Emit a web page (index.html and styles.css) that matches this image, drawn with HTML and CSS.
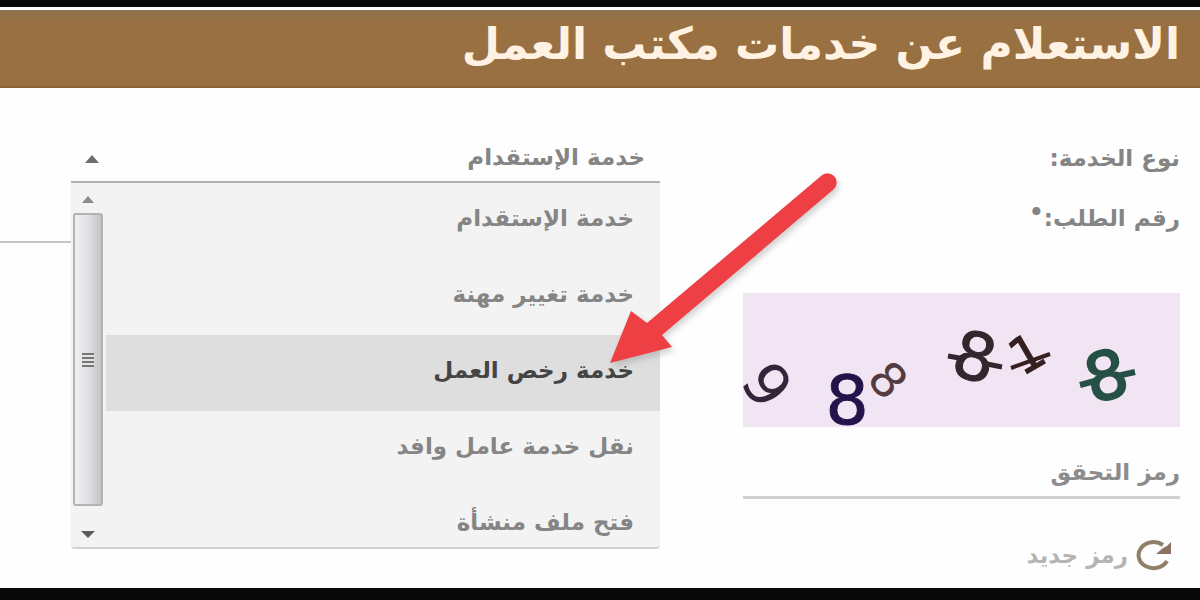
FILE: index.html
```html
<!DOCTYPE html>
<html lang="ar" dir="rtl">
<head>
<meta charset="utf-8">
<meta name="viewport" content="width=device-width, initial-scale=1">
<title>الاستعلام عن خدمات مكتب العمل</title>
<link rel="stylesheet" href="styles.css">
</head>
<body>
<main class="page">
  <header class="banner"><h1 class="title">الاستعلام عن خدمات مكتب العمل</h1></header>
  <form class="form">
    <div class="side">
      <label class="label" for="service">نوع الخدمة:</label>
      <label class="label" for="number">رقم الطلب:<span class="required">•</span></label>
      <svg class="captcha" viewBox="0 0 437 134" role="img" aria-label="رمز التحقق">
        <g class="digits">
          <text transform="translate(24 92) rotate(55)" y="21" font-size="60" fill="#35243a">9</text>
          <text transform="translate(104 106)" y="25" font-size="68" stroke="#24134a" fill="#24134a">8</text>
          <text transform="translate(145 87) rotate(48)" y="17" font-size="48" fill="#553a40">8</text>
          <text transform="translate(232 63) rotate(14)" y="24" font-size="66" stroke="#35252c" fill="#35252c">8</text>
          <text transform="translate(284 61) rotate(-30)" y="17" font-size="50" stroke="#351f20" fill="#351f20">1</text>
          <text transform="translate(363 82) rotate(-14)" y="24" font-size="66" stroke="#265045" stroke-width="2" fill="#265045">8</text>
        </g>
        <path d="M205 63L222 66M244 71L259 74" stroke="#35252c" stroke-width="5"/>
        <path d="M268 75L307 61" stroke="#351f20" stroke-width="4"/>
        <path d="M337 92L352 88M374 83L392 79" stroke="#265045" stroke-width="6"/>
      </svg>
      <div class="code">
        <label class="code-label" for="code">رمز التحقق</label>
        <input class="code-input" id="code" type="text">
      </div>
      <button class="refresh" type="button">
        <svg class="refresh-icon" viewBox="0 0 36 32" aria-hidden="true">
          <path d="M27 6A15 13 0 1 0 31 22" fill="none" stroke="#8f8068" stroke-width="4"/>
          <path d="M35 3V15H20L27 9L31 7Z" fill="#8d7162"/>
        </svg>
        <span>رمز جديد</span>
      </button>
    </div>
    <div class="fields">
      <div class="picker">
        <select class="select" id="service"><option>خدمة الإستقدام</option></select>
        <svg class="caret" viewBox="0 0 14 8" aria-hidden="true"><path d="M0 8L7 0L14 8Z" fill="#6e6e6e"/></svg>
        <div class="menu">
          <ul class="options" role="listbox" aria-label="نوع الخدمة">
            <li class="option" role="option">خدمة الإستقدام</li>
            <li class="option" role="option">خدمة تغيير مهنة</li>
            <li class="option selected" role="option" aria-selected="true">خدمة رخص العمل</li>
            <li class="option" role="option">نقل خدمة عامل وافد</li>
            <li class="option" role="option">فتح ملف منشأة</li>
          </ul>
          <div class="scrollbar">
            <svg class="scroll-arrow" viewBox="0 0 14 8" aria-hidden="true"><path d="M1 8L7 1L13 8Z" fill="#8a8a8a"/></svg>
            <div class="thumb"><span class="grip"></span></div>
            <svg class="scroll-arrow" viewBox="0 0 14 8" aria-hidden="true"><path d="M0 0H14L7 7Z" fill="#5c5c5c"/></svg>
          </div>
        </div>
        <svg class="arrow" viewBox="0 0 240 200" aria-hidden="true">
          <path d="M10 193L31 141L47 153L221 6A9 9 0 0 1 234 19L62 165L72 177Z" fill="#ee4044"/>
        </svg>
      </div>
      <input class="number" id="number" type="text">
    </div>
  </form>
</main>
</body>
</html>
```
FILE: styles.css
```css
* {
  box-sizing: border-box;
}

body {
  margin: 0;
  min-height: 100vh;
  padding: 7px 0 12px;
  display: flex;
  background: #080808;
  color: #858585;
  font-family: "DejaVu Sans", sans-serif;
  font-size: 23px;
  font-weight: 700;
}

input,
select,
button {
  margin: 0;
  padding: 0;
  border: 0;
  border-radius: 0;
  background: none;
  color: inherit;
  font: inherit;
}

.page {
  flex: 1;
  padding-top: 3px;
  background: #fefefe;
}

.banner {
  height: 78px;
  padding: 0 20px 8px;
  display: flex;
  align-items: center;
  background: linear-gradient(#8d724c, #987041 12px);
  border-bottom: 2px solid #8f6233;
}

.title {
  margin: 0;
  color: #fff2e2;
  font-size: 44px;
  line-height: 68px;
  white-space: nowrap;
}

.form {
  display: grid;
  grid-template-columns: 437fr 660fr;
  column-gap: 83px;
  padding: 40px 20px 0 0;
}

.side {
  display: flex;
  flex-direction: column;
}

.label {
  height: 60px;
  line-height: 60px;
}

.required {
  display: inline-block;
  vertical-align: 6px;
  line-height: 20px;
}

.captcha {
  width: 100%;
  margin-top: 45px;
  display: block;
  overflow: visible;
  background: #f1e5f3;
}

.digits {
  direction: ltr;
  text-anchor: middle;
  font-weight: 400;
}

.code {
  height: 52px;
  margin-top: 20px;
  display: flex;
  border-bottom: 3px solid #d0cece;
}

.code-label {
  color: #8c8c8c;
  line-height: 50px;
}

.code-input {
  flex: 1;
  min-width: 0;
}

.refresh {
  align-self: flex-start;
  height: 40px;
  margin-top: 36px;
  padding-right: 8px;
  display: flex;
  align-items: center;
  gap: 8px;
  color: #b4b4b4;
}

.refresh-icon {
  width: 36px;
  height: 32px;
}

.picker {
  position: relative;
  margin-left: 71px;
}

.select {
  width: 100%;
  height: 55px;
  padding: 4px 15px 0 40px;
  appearance: none;
  border-bottom: 2px solid #b0b0b0;
}

.caret {
  position: absolute;
  left: 14px;
  top: 27px;
  width: 14px;
  height: 8px;
}

.menu {
  position: absolute;
  z-index: 1;
  top: 55px;
  left: 0;
  right: 0;
  height: 366px;
  display: flex;
  background: #f3f3f4;
  border-bottom: 2px solid #d2d2d2;
  border-radius: 0 0 4px 4px;
}

.options {
  flex: 1;
  margin: 0;
  padding: 0;
  overflow: hidden;
  list-style: none;
}

.option {
  height: 76px;
  padding-right: 26px;
  line-height: 70px;
}

.selected {
  background: #dedede;
  color: #444;
}

.scrollbar {
  width: 35px;
  padding: 12px 2px 8px 1px;
  display: flex;
  flex-direction: column;
  align-items: center;
}

.scroll-arrow {
  width: 14px;
  height: 8px;
}

.thumb {
  flex: 1;
  width: 30px;
  margin: 10px 0 25px;
  display: flex;
  align-items: center;
  justify-content: center;
  background: linear-gradient(90deg, #f1f1f3, #e0e0e2 50%, #c4c4c8);
  border: 2px solid #b3b3b5;
  border-radius: 3px;
}

.grip {
  width: 12px;
  height: 14px;
  background: repeating-linear-gradient(#777 0 2px, #e4e4e4 2px 4px);
}

.arrow {
  position: absolute;
  z-index: 2;
  top: 42px;
  right: -180px;
  width: 240px;
  height: 200px;
  filter: drop-shadow(2px 4px 3px #7775);
}

.number {
  width: 100%;
  height: 60px;
  display: block;
  border-bottom: 2px solid #c4c4c4;
}
```
